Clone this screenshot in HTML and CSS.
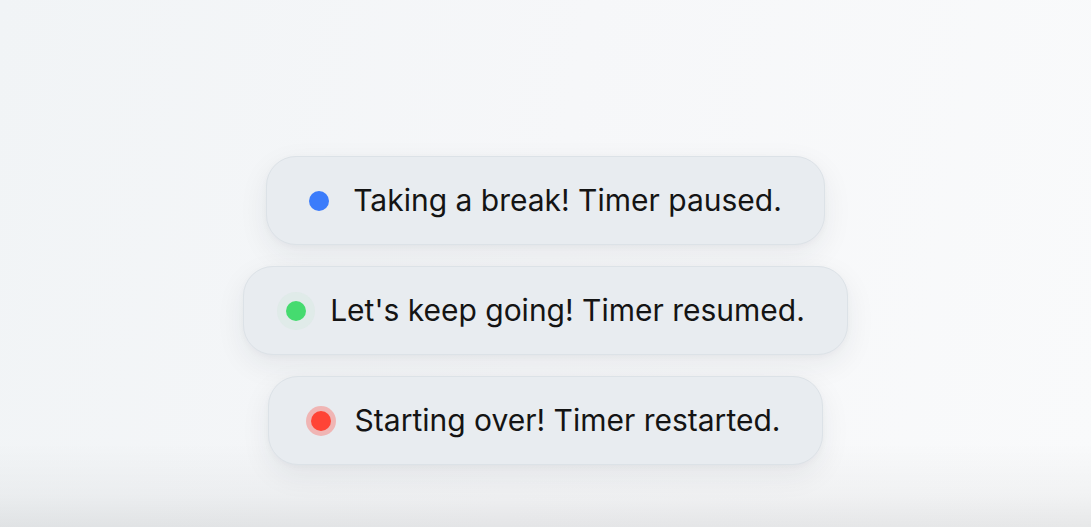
FILE: index.html
```html
<!DOCTYPE html>
<html lang="en">
<head>
<meta charset="utf-8">
<title>Timer toasts</title>
<link rel="stylesheet" href="styles.css">
</head>
<body>
<main class="stack">
  <div class="toast">
    <span class="dot dot-blue"></span>
    <span class="msg">Taking a break! Timer paused.</span>
  </div>
  <div class="toast">
    <span class="dot dot-green"></span>
    <span class="msg">Let's keep going! Timer resumed.</span>
  </div>
  <div class="toast">
    <span class="dot dot-red"></span>
    <span class="msg">Starting over! Timer restarted.</span>
  </div>
</main>
</body>
</html>
```

FILE: styles.css
```css
html, body {
  margin: 0;
  height: 100%;
}
body {
  font-family: Inter, "Noto Sans", sans-serif;
  color: #141414;
  background:
    linear-gradient(to bottom, rgba(0,0,0,0) 84%, rgba(0,0,0,0.03) 94%, rgba(0,0,0,0.075) 100%),
    linear-gradient(100deg, #f1f4f6 0%, #f6f7f9 50%, #f9fafb 100%);
  overflow: hidden;
}
.stack {
  display: flex;
  flex-direction: column;
  align-items: center;
  gap: 21px;
  padding-top: 156px;
}
.toast {
  display: flex;
  align-items: center;
  gap: 24px;
  padding: 26px 42px;
  line-height: 35px;
  font-size: 30px;
  background: #e8ecf0;
  border: 1px solid #dce2e7;
  border-radius: 30px;
  box-shadow: 0 10px 30px rgba(30, 40, 60, 0.07), 0 2px 6px rgba(30, 40, 60, 0.03);
}
.dot {
  width: 20px;
  height: 20px;
  border-radius: 50%;
  flex: none;
}
.dot-blue { background: #3b7cfb; }
.dot-green {
  background: #45db6f;
  box-shadow: 0 0 0 9px rgba(200, 230, 210, 0.25);
}
.dot-red {
  background: #ff4436;
  box-shadow: 0 0 0 5px rgba(255, 80, 70, 0.35);
}
.msg {
  white-space: nowrap;
}
```
